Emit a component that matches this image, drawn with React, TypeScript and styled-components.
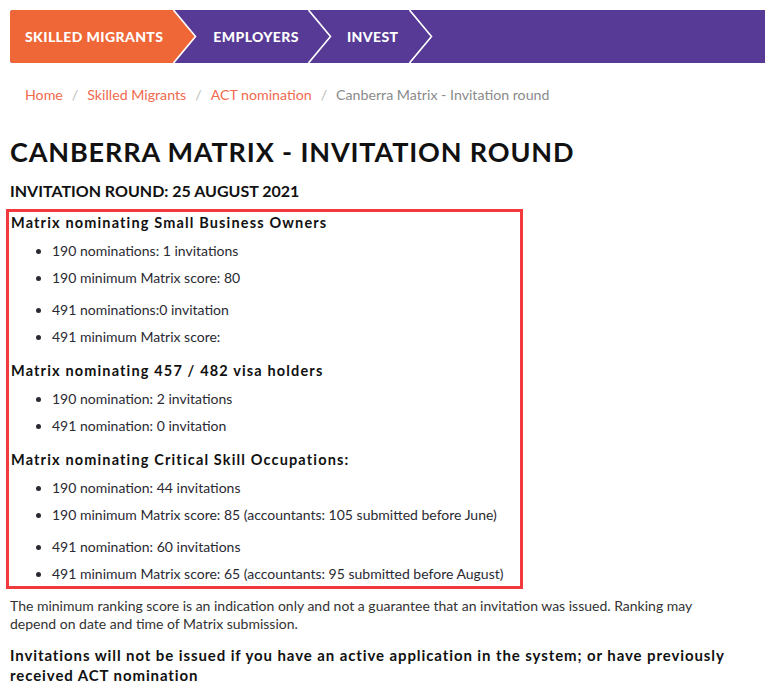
import styled, { createGlobalStyle } from "styled-components"

const GlobalStyle = createGlobalStyle`
    body {
        margin: 0;
        background: #fff;
        font-family: "Lato", "Liberation Sans", sans-serif;
        color: #222;
    }
`

const navItems = [
    { label: "SKILLED MIGRANTS", active: true },
    { label: "EMPLOYERS", active: false },
    { label: "INVEST", active: false },
]

const crumbs = ["Home", "Skilled Migrants", "ACT nomination"]

const sections = [
    {
        title: "Matrix nominating Small Business Owners",
        lists: [
            ["190 nominations: 1 invitations", "190 minimum Matrix score: 80"],
            ["491 nominations:0 invitation", "491 minimum Matrix score:"],
        ],
    },
    {
        title: "Matrix nominating 457 / 482 visa holders",
        lists: [["190 nomination: 2 invitations", "491 nomination: 0 invitation"]],
    },
    {
        title: "Matrix nominating Critical Skill Occupations:",
        lists: [
            [
                "190 nomination: 44 invitations",
                "190 minimum Matrix score: 85 (accountants: 105 submitted before June)",
            ],
            [
                "491 nomination: 60 invitations",
                "491 minimum Matrix score: 65 (accountants: 95 submitted before August)",
            ],
        ],
    },
]

function Chevron({ active }: { active: boolean }) {
    return (
        <ChevronSvg viewBox="0 0 24 53" preserveAspectRatio="none">
            {active && <polygon points="0,0 22.5,26.5 0,53" fill="#ef6637" />}
            <polyline points="0.5,0 22.5,26.5 0.5,53" fill="none" stroke="#fff" strokeWidth="1.6" />
        </ChevronSvg>
    )
}

function App() {
    return (
        <>
            <GlobalStyle />
            <Nav>
                {navItems.map((item) => (
                    <NavGroup key={item.label}>
                        <NavLink $active={item.active}>{item.label}</NavLink>
                        <Chevron active={item.active} />
                    </NavGroup>
                ))}
            </Nav>
            <Page>
                <Breadcrumb>
                    {crumbs.map((c) => (
                        <span key={c}>
                            <Crumb>{c}</Crumb>
                            <Sep>/</Sep>
                        </span>
                    ))}
                    <Current>Canberra Matrix - Invitation round</Current>
                </Breadcrumb>
                <Title>CANBERRA MATRIX - INVITATION ROUND</Title>
                <Subtitle>INVITATION ROUND: 25 AUGUST 2021</Subtitle>
                <Highlight>
                    {sections.map((s) => (
                        <div key={s.title}>
                            <SectionTitle>{s.title}</SectionTitle>
                            {s.lists.map((list, i) => (
                                <List key={i}>
                                    {list.map((line) => (
                                        <Item key={line}>{line}</Item>
                                    ))}
                                </List>
                            ))}
                        </div>
                    ))}
                </Highlight>
                <Note>
                    The minimum ranking score is an indication only and not a guarantee that an invitation was issued. Ranking may
                    depend on date and time of Matrix submission.
                </Note>
                <Warning>
                    Invitations will not be issued if you have an active application in the system; or have previously received ACT nomination
                </Warning>
            </Page>
        </>
    )
}

const Nav = styled.nav`
    display: flex;
    height: 53px;
    margin: 10px 0 0 10px;
    background: #573a95;
    border-radius: 3px 0 0 3px;
    overflow: hidden;
`

const NavGroup = styled.div`
    display: flex;
    &:nth-child(2) a { padding: 0 9px 0 16px; }
    &:nth-child(3) a { padding: 0 11px 0 15px; }
`

const NavLink = styled.a<{ $active: boolean }>`
    display: flex;
    align-items: center;
    padding: 0 10px 0 15px;
    background: ${(p) => (p.$active ? "#ef6637" : "transparent")};
    color: #fff;
    font-family: "Lato", sans-serif;
    font-weight: 900;
    font-size: 14px;
    letter-spacing: 0.4px;
    white-space: nowrap;
`

const ChevronSvg = styled.svg`
    width: 24px;
    height: 53px;
    display: block;
    flex: none;
`

const Page = styled.main`
    padding: 0 0 0 10px;
`

const Breadcrumb = styled.div`
    margin-top: 22px;
    padding-left: 15px;
    font-size: 14.2px;
    line-height: 20px;
    white-space: nowrap;
`

const Crumb = styled.a`
    color: #f06a4e;
`

const Sep = styled.span`
    color: #bbb;
    padding: 0 9px;
`

const Current = styled.span`
    color: #8a8a8a;
`

const Title = styled.h1`
    margin: 31px 0 0;
    font-size: 27px;
    line-height: 32px;
    font-weight: 700;
    letter-spacing: 0.85px;
    color: #111;
    white-space: nowrap;
`

const Subtitle = styled.h2`
    margin: 12px 0 0;
    font-size: 16px;
    line-height: 22px;
    font-weight: 700;
    color: #111;
    letter-spacing: 0;
`

const Highlight = styled.section`
    margin: 7px 0 0 -4px;
    width: 509px;
    border: 3px solid #f2393d;
    padding: 1px 0 2px 2px;
`

/* margins collapse with the list's bottom margin, so 14px is the real gap */
const SectionTitle = styled.h3`
    margin: 14px 0 8px;
    font-size: 14.5px;
    line-height: 20px;
    font-weight: 700;
    letter-spacing: 1.15px;
    color: #111;
    white-space: nowrap;
    div:first-child > & { margin-top: 0; }
`

const List = styled.ul`
    display: flex;
    flex-direction: column;
    gap: 7px;
    margin: 0 0 12px;
    padding-left: 41px;
    div:last-child > &:last-child { margin-bottom: 0; }
`

const Item = styled.li`
    font-size: 14px;
    line-height: 20px;
    color: #2a2a33;
    white-space: nowrap;
`

const Note = styled.p`
    margin: 8px 0 0;
    font-size: 14px;
    line-height: 18px;
    color: #333;
    max-width: 715px;
`

const Warning = styled.p`
    margin: 12px 0 0;
    font-size: 15px;
    line-height: 20px;
    font-weight: 700;
    letter-spacing: 0.9px;
    color: #111;
    max-width: 735px;
`

export default App
